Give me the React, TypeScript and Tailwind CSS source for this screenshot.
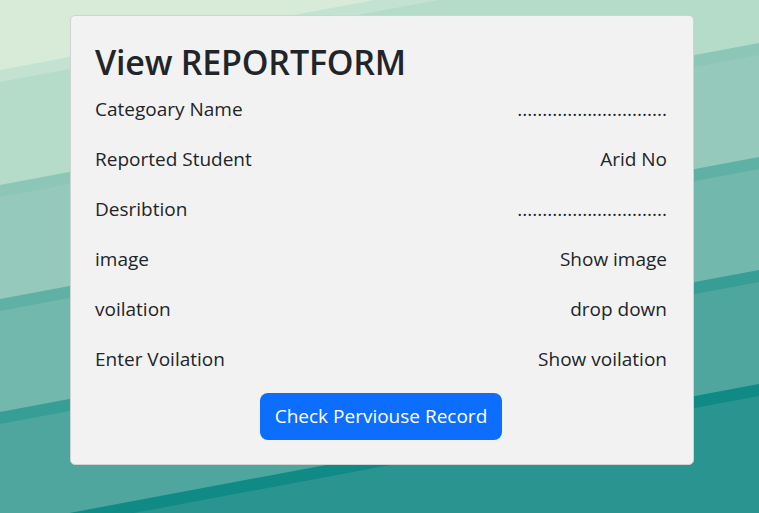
import React from "react";

const rows = [
  { label: "Categoary Name", value: ".............................." },
  { label: "Reported Student", value: "Arid No" },
  { label: "Desribtion", value: ".............................." },
  { label: "image", value: "Show image" },
  { label: "voilation", value: "drop down" },
  { label: "Enter Voilation", value: "Show voilation" },
];

function Backdrop() {
  // layered diagonal bands, each with a darker stripe along its top edge
  const bands = [
    { y: 70, stripe: "#c4e2d2", fill: "#b5dbc9" },
    { y: 185, stripe: "#8cc6b7", fill: "#95c9bb" },
    { y: 299, stripe: "#5fb1a6", fill: "#72b8ad" },
    { y: 412, stripe: "#379e96", fill: "#4ea69e" },
    { y: 526, stripe: "#0f8a84", fill: "#2a9490" },
  ];
  const rise = 142;
  return (
    <svg className="absolute inset-0 w-full h-full" viewBox="0 0 759 513" preserveAspectRatio="none">
      <rect width="759" height="513" fill="#d8ebd8" />
      {bands.map((b) => (
        <g key={b.y}>
          <polygon points={`0,${b.y} 759,${b.y - rise} 759,600 0,600`} fill={b.stripe} />
          <polygon points={`0,${b.y + 12} 759,${b.y - rise + 12} 759,600 0,600`} fill={b.fill} />
        </g>
      ))}
    </svg>
  );
}

export default function App() {
  return (
    <div className="relative w-[759px] h-[513px] overflow-hidden font-['Open_Sans',sans-serif] text-[#212529]">
      <Backdrop />
      <div className="relative pt-[15px] pl-[70px]">
        <div className="w-[624px] h-[450px] bg-[#f2f2f2] border border-[#cfd3d1] rounded-[5px] pt-6 pb-6 pl-6 pr-[26px] flex flex-col">
          <h1 className="text-[34px] leading-[44px] font-semibold tracking-[-0.2px]">View REPORTFORM</h1>
          {rows.map((r) => (
            <div key={r.label} className="h-[50px] flex items-center justify-between text-[19px]">
              <span>{r.label}</span>
              <span>{r.value}</span>
            </div>
          ))}
          <div className="flex justify-center mt-[9px]">
            <button className="w-[242px] h-[47px] rounded-lg bg-[#0d6efd] text-white text-[19px]">
              Check Perviouse Record
            </button>
          </div>
        </div>
      </div>
    </div>
  );
}
